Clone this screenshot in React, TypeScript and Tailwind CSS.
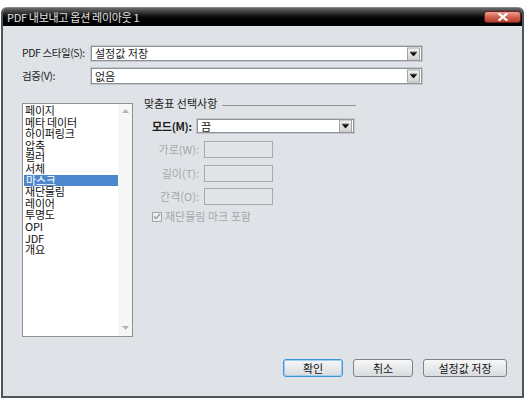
import React from "react";

const FONT = { fontFamily: '"Noto Sans CJK KR", "Noto Sans", "Liberation Sans", sans-serif' };

function Arrow() {
  return (
    <div className="absolute right-[1px] top-1/2 -translate-y-1/2 w-[13px] h-[13px] bg-gradient-to-b from-[#f0f0f0] to-[#d4d4d4] border border-[#a2a2a2] flex items-center justify-center">
      <svg width="7" height="5" viewBox="0 0 7 5">
        <rect x="0" y="0" width="7" height="1" fill="#111" />
        <polygon points="0,1 7,1 3.5,5" fill="#111" />
      </svg>
    </div>
  );
}

function Select({ value, w, h }: { value: string; w: string; h: string }) {
  return (
    <div className={`${w} ${h} border border-[#c3c7cb] bg-white`}>
      <div className="relative w-full h-full border border-[#8f9396] bg-white flex items-center pl-[3px] text-[11px] text-[#1a1a1a] leading-none">
        {value}
        <Arrow />
      </div>
    </div>
  );
}

const items = ["페이지", "메타 데이터", "하이퍼링크", "압축", "컬러", "서체", "마스크", "재단물림", "레이어", "투명도", "OPI", "JDF", "개요"];

export default function App() {
  return (
    <div className="w-[530px] h-[410px] bg-white pt-[7px] pl-[1px]" style={FONT}>
      <div className="w-[523px] h-[391px] flex flex-col rounded-t-[6px] overflow-hidden border-x-2 border-b-2 border-[#505357]">
        <div className="h-[19px] flex items-start justify-between bg-gradient-to-b from-[#6a6a6a] via-[#0a0a0a] to-black shrink-0 border-t border-[#8a8a8a]">
          <div className="text-[11px] text-[#e0e0e0] leading-none pl-[4px] pt-[4px] tracking-[-0.3px] whitespace-nowrap">PDF 내보내고 옵션 레이아웃 1</div>
          <div className="mt-[3px] mr-[1px] w-[37px] h-[12px] rounded-[3px] border border-[#6b2219] bg-gradient-to-b from-[#eea293] via-[#d2604f] to-[#b8402f] flex items-center justify-center">
            <svg width="10" height="8" viewBox="0 0 10 8">
              <path d="M1.5 1 L8.5 7 M8.5 1 L1.5 7" stroke="#fff" strokeWidth="2.2" strokeLinecap="square" />
            </svg>
          </div>
        </div>
        <div className="flex-1 bg-[#dfe3e7] flex flex-col pl-[19px] pr-[15px]">
          <div className="flex items-center mt-[19px] h-[17px]">
            <div className="w-[68px] text-[10.5px] text-[#1e1e1e] leading-none whitespace-nowrap tracking-[-0.4px]">PDF 스타일(S):</div>
            <Select value="설정값 저장" w="w-[333px]" h="h-[17px]" />
          </div>
          <div className="flex items-center mt-[5px] h-[18px]">
            <div className="w-[68px] text-[10.5px] text-[#1e1e1e] leading-none whitespace-nowrap tracking-[-0.4px]">검증(V):</div>
            <Select value="없음" w="w-[333px]" h="h-[18px]" />
          </div>
          <div className="flex mt-[18px]">
            <div className="w-[111px] h-[234px] border border-[#8e9295] bg-white flex">
              <div className="flex-1 pt-[1px]">
                {items.map((it) => (
                  <div
                    key={it}
                    className={`h-[11.6px] leading-[11.6px] text-[11px] pl-[2px] tracking-[-0.2px] whitespace-nowrap ${it === "마스크" ? "bg-[#4d88cf] text-white ml-[1px] pl-[1px]" : "text-[#111]"}`}
                  >
                    {it}
                  </div>
                ))}
              </div>
              <div className="w-[14px] bg-[#f6f6f6] flex flex-col items-center justify-between pt-[5px] pb-[6px]">
                <svg width="7" height="4" viewBox="0 0 7 4"><polygon points="3.5,0 7,4 0,4" fill="#b4b4b4" /></svg>
                <svg width="7" height="4" viewBox="0 0 7 4"><polygon points="0,0 7,0 3.5,4" fill="#b4b4b4" /></svg>
              </div>
            </div>
            <div className="ml-[11px] flex flex-col">
              <div className="flex items-center h-[12px] -mt-[6px]">
                <span className="text-[11px] text-[#1a1a1a] leading-none whitespace-nowrap">맞춤표 선택사항</span>
                <div className="ml-[5px] w-[134px] h-[1px] bg-[#8f9396] mt-[5px]" />
              </div>
              <div className="flex items-center mt-[9px] ml-[8px] h-[16px]">
                <span className="w-[44px] text-[11px] font-bold text-[#1a1a1a] leading-none whitespace-nowrap tracking-[-0.3px]">모드(M):</span>
                <Select value="끔" w="w-[159px]" h="h-[16px]" />
              </div>
              {[
                ["가로(W):", "mt-[7px]"],
                ["길이(T):", "mt-[7px]"],
                ["간격(O):", "mt-[6px]"],
              ].map(([l, m]) => (
                <div key={l} className={`flex items-center ${m} h-[17px]`}>
                  <span className="w-[56px] text-right text-[11px] text-[#a4a7aa] leading-none pr-[1px] whitespace-nowrap">{l}</span>
                  <div className="ml-[4px] w-[69px] h-[17px] border border-[#a6aaae] bg-[#e2e5e8]" />
                </div>
              ))}
              <div className="flex items-center mt-[6px] ml-[8px] h-[11px]">
                <div className="w-[10px] h-[10px] border border-[#a3a7ab] bg-[#eceef0] flex items-center justify-center">
                  <svg width="8" height="7" viewBox="0 0 8 7"><path d="M1 3.5 L3 5.5 L7 1" stroke="#9a9da0" strokeWidth="1.4" fill="none" /></svg>
                </div>
                <span className="ml-[3px] text-[11px] text-[#a4a7aa] leading-none whitespace-nowrap">재단물림 마크 포함</span>
              </div>
            </div>
          </div>
          <div className="flex justify-end gap-[10px] mt-[22px]">
            {["확인", "취소", "설정값 저장"].map((b, i) => (
              <div
                key={b}
                className={`h-[18px] ${i === 2 ? "w-[84px]" : "w-[60px]"} rounded-[3px] border ${i === 0 ? "border-[#3c95d8] shadow-[inset_0_0_0_1px_#9fd0f2]" : "border-[#7f8387]"} bg-gradient-to-b from-[#f7f7f7] to-[#d9dcdf] flex items-center justify-center text-[11px] text-[#111] leading-none`}
              >
                {b}
              </div>
            ))}
          </div>
        </div>
      </div>
    </div>
  );
}
